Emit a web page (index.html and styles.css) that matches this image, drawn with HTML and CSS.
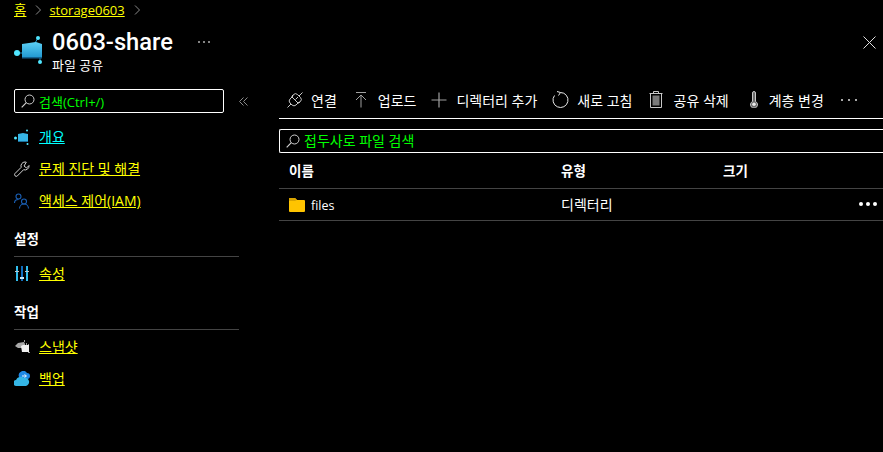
FILE: index.html
```html
<!DOCTYPE html>
<html lang="ko">
<head>
    <meta charset="UTF-8">
    <title>0603-share - 파일 공유</title>
    <link rel="stylesheet" href="styles.css">
</head>
<body>
    <nav class="breadcrumb">
        <a class="home" href="#">홈</a>
        <svg class="crumb-sep" width="6" height="10" viewBox="0 0 6 10"><path d="M1 .5 5.500 5 1 9.500" fill="none" stroke="#8a8a8a"/></svg>
        <a href="#">storage0603</a>
        <svg class="crumb-sep" width="6" height="10" viewBox="0 0 6 10"><path d="M1 .5 5.500 5 1 9.500" fill="none" stroke="#8a8a8a"/></svg>
    </nav>

    <header class="title-bar">
        <svg class="share-icon" width="29" height="30" viewBox="0 0 29 30">
            <defs>
                <linearGradient id="shareFill" x1="0" y1="0" x2="0" y2="1">
                    <stop offset="0" stop-color="#5cd0f5"/>
                    <stop offset="1" stop-color="#1f96cf"/>
                </linearGradient>
            </defs>
            <path d="M21 9 24 4M3 19h5M26 24v4" stroke="#1f8fbf"/>
            <path d="M8 10 22 8l6 2v14H8z" fill="url(#shareFill)"/>
            <path d="M8 23h20v1.500H8z" fill="#13618f"/>
            <circle cx="24" cy="4" r="2" fill="#50e6ff"/>
            <circle cx="3" cy="19" r="3" fill="#50e6ff"/>
            <circle cx="26" cy="28" r="2" fill="#50e6ff"/>
        </svg>
        <div class="title-text">
            <h1>0603-share</h1>
            <p>파일 공유</p>
        </div>
        <div class="dots title-more"><i></i><i></i><i></i></div>
        <svg class="close-icon" width="13" height="13" viewBox="0 0 13 13"><path d="M.5.500l12 12M12.500.500l-12 12" stroke="#e0e0e0" fill="none"/></svg>
    </header>

    <div class="content">
        <aside class="sidebar">
            <div class="side-search-row">
                <div class="search-box side-search">
                    <svg width="14" height="14" viewBox="0 0 14 14"><circle cx="8.500" cy="5.500" r="4.500" fill="none" stroke="#d0d0d0"/><path d="M5.300 8.700.7 13.300" stroke="#d0d0d0" stroke-width="1.200"/></svg>
                    <span>검색(Ctrl+/)</span>
                </div>
                <svg class="collapse" width="9" height="9" viewBox="0 0 9 9"><path d="M4.500.500.500 4.500l4 4M8.500.500l-4 4 4 4" fill="none" stroke="#8a8a8a"/></svg>
            </div>

            <ul class="menu">
                <li>
                    <svg width="16" height="16" viewBox="0 0 16 16">
                        <path d="M4 5 9 4l5 1v8H4z" fill="#35b6e6"/>
                        <path d="M4 12h10v1H4z" fill="#1b6f9c"/>
                        <circle cx="13" cy="1.500" r="1" fill="#50e6ff"/><circle cx="1.500" cy="9" r="1.500" fill="#50e6ff"/><circle cx="13.500" cy="15" r="1" fill="#50e6ff"/>
                    </svg>
                    <a class="current" href="#">개요</a>
                </li>
                <li>
                    <svg width="16" height="16" viewBox="0 0 16 16"><path d="M11 1a4 4 0 0 0-3.800 5.300L1 12.500a1.700 1.700 0 0 0 2.400 2.400l6.200-6.200A4 4 0 0 0 15 4.500L12.500 7 10 5l2.300-3.800A4 4 0 0 0 11 1z" fill="none" stroke="#d4d4d4"/></svg>
                    <a href="#">문제 진단 및 해결</a>
                </li>
                <li>
                    <svg width="16" height="16" viewBox="0 0 16 16" fill="none" stroke="#1a5fb4" stroke-width="1.100"><circle cx="4.500" cy="3.500" r="2.500"/><path d="M.5 10c0-2 1.500-3.500 4-3.500"/><circle cx="10" cy="8.500" r="2.500"/><path d="M5.500 15.500c0-2.500 2-4.500 4.500-4.500s4.500 2 4.500 4.500"/></svg>
                    <a href="#">액세스 제어(IAM)</a>
                </li>
            </ul>

            <h2 class="section-title">설정</h2>
            <ul class="menu">
                <li>
                    <svg width="16" height="16" viewBox="0 0 16 16">
                        <path d="M2 0h2v15H2zM12 0h2v15h-2z" fill="#32bdec"/><path d="M7 0h2v15H7z" fill="#0f6cbd"/>
                        <path d="M1 5h4v1H1zM11 5h4v1h-4z" fill="#b8c8d0"/><path d="M6 11h4v2H6z" fill="#c8e8f8"/>
                    </svg>
                    <a href="#">속성</a>
                </li>
            </ul>

            <h2 class="section-title">작업</h2>
            <ul class="menu">
                <li>
                    <svg width="16" height="16" viewBox="0 0 16 16">
                        <path d="M1 7l3-3 6-1 1 2v4H4z" fill="#a8a8a8"/>
                        <path d="M10 1h1v2h-1zM14 5h1v2h-1zM12 4h1v2h-1zM14 13h2v1h-2z" fill="#9a9a9a"/>
                        <path d="M7 7l2-1h6v7H8z" fill="#f0f0f0"/>
                    </svg>
                    <a href="#">스냅샷</a>
                </li>
                <li>
                    <svg width="16" height="16" viewBox="0 0 16 16">
                        <path d="M5 6a4.500 4.500 0 0 1 8-4 3 3 0 0 1 3 3 3 3 0 0 1-2 3H8z" fill="#1e88e5"/>
                        <path d="M3 15a3 3 0 0 1-1-6 5 5 0 0 1 8-2 3.500 3.500 0 0 1 2 8z" fill="#35b6e6"/>
                        <path d="M8 5h4M10.500 3.500l2 1.500-2 1.500" stroke="#e8f4ff" fill="none"/>
                    </svg>
                    <a href="#">백업</a>
                </li>
            </ul>
        </aside>

        <main class="main">
            <div class="toolbar">
                <button class="tool tool-link">
                    <svg width="16" height="16" viewBox="0 0 16 16" fill="none" stroke="#c8c8c8"><path d="M.5 15.500l3.500-3.500M15.500.500 12 4M5 5l6 6-2 2a3 3 0 0 1-4 0l-2-2a3 3 0 0 1 0-4zM6.500 3.500 3 7M12.500 9.500 9 13M11 5 8.500 7.500"/><path d="M4.500 4.500l2-2a3 3 0 0 1 4 0l3 3a3 3 0 0 1 0 4l-2 2"/></svg>
                    <span>연결</span>
                </button>
                <button class="tool tool-upload">
                    <svg width="12" height="16" viewBox="0 0 12 16" fill="none" stroke="#a0a0a0"><path d="M1 .5h10M6 15.500V3M1 8l5-5 5 5"/></svg>
                    <span>업로드</span>
                </button>
                <button class="tool tool-add">
                    <svg width="16" height="16" viewBox="0 0 16 16" stroke="#a0a0a0" stroke-width="1.200"><path d="M8 .5v15M.5 8h15"/></svg>
                    <span>디렉터리 추가</span>
                </button>
                <button class="tool tool-refresh">
                    <svg width="17" height="17" viewBox="0 0 17 17" fill="none" stroke="#e8e8e8"><path d="M8.500 1.500a7.500 7.500 0 1 1-6 3"/><path d="M5 .5 8.500 1.500 6.500 4.500"/></svg>
                    <span>새로 고침</span>
                </button>
                <button class="tool tool-delete">
                    <svg width="14" height="17" viewBox="0 0 14 17"><path d="M.5 2.500h13M4.500 2.500v-2h5v2" fill="none" stroke="#c8c8c8"/><path d="M1.500 2.500h11v14h-11z" fill="none" stroke="#c8c8c8"/><path d="M3.500 4.500h7v10h-7z" fill="#7a7a7a"/></svg>
                    <span>공유 삭제</span>
                </button>
                <button class="tool tool-tier">
                    <svg width="8" height="17" viewBox="0 0 8 17"><path d="M2.500 2a1.500 1.500 0 0 1 3 0v8.500a3.500 3.500 0 1 1-3 0z" fill="#6a6a6a" stroke="#c8c8c8"/><circle cx="4" cy="13.300" r="1.800" fill="#e8e8e8"/></svg>
                    <span>계층 변경</span>
                </button>
                <div class="dots tool-more"><i></i><i></i><i></i></div>
            </div>

            <div class="search-box file-search">
                <svg width="14" height="14" viewBox="0 0 14 14"><circle cx="8.500" cy="5.500" r="4.500" fill="none" stroke="#d0d0d0"/><path d="M5.300 8.700.7 13.300" stroke="#d0d0d0" stroke-width="1.200"/></svg>
                <span>접두사로 파일 검색</span>
            </div>

            <div class="row head">
                <div class="col-name">이름</div>
                <div class="col-type">유형</div>
                <div class="col-size">크기</div>
            </div>
            <div class="row">
                <div class="col-name">
                    <svg width="16" height="14" viewBox="0 0 16 14"><path d="M0 1a1 1 0 0 1 1-1h5l2 2h7a1 1 0 0 1 1 1v10a1 1 0 0 1-1 1H1a1 1 0 0 1-1-1z" fill="#ffc400"/><path d="M0 1a1 1 0 0 1 1-1h5l2 2-2 1H0z" fill="#d9a400"/></svg>
                    <span class="file-name">files</span>
                </div>
                <div class="col-type">디렉터리</div>
                <div class="col-size"></div>
                <div class="dots row-more"><i></i><i></i><i></i></div>
            </div>
        </main>
    </div>
</body>
</html>
```

FILE: styles.css
```css
* {
    box-sizing: border-box;
}
html, body {
    height: 100%;
}
body {
    margin: 0;
    background: #000;
    color: #fff;
    font-family: "Open Sans", "Noto Sans CJK KR", sans-serif;
    font-size: 14px;
    overflow: hidden;
}
a {
    color: #ff0;
    text-decoration: underline;
    text-underline-offset: 1px;
}
ul {
    list-style: none;
    margin: 0;
    padding: 0;
}
svg {
    flex: none;
    display: block;
}

.dots {
    display: flex;
    align-items: center;
    flex: none;
}
.dots i {
    display: block;
    border-radius: 50%;
    background: #e0e0e0;
}

.breadcrumb {
    display: flex;
    align-items: center;
    height: 18px;
    padding: 2px 0 0 14px;
    font-size: 13px;
    line-height: 16px;
}
.breadcrumb .home {
    font-size: 13.5px;
}
.crumb-sep {
    margin: 0 8px 0 9px;
}

.title-bar {
    display: flex;
    align-items: flex-start;
    height: 62px;
    padding: 10px 14px 0 14px;
}
.share-icon {
    margin-top: 6px;
}
.title-text {
    margin-left: 9px;
}
h1 {
    margin: 0;
    font-family: Roboto, "Open Sans", sans-serif;
    font-size: 23.7px;
    font-weight: 500;
    line-height: 28px;
}
.title-text p {
    margin: 2px 0 0;
    font-size: 13px;
    line-height: 14px;
}
.title-more {
    margin: 13px 0 0 25px;
    gap: 3px;
}
.title-more i {
    width: 2px;
    height: 2px;
    background: #b0b0b0;
}
.close-icon {
    margin: 8px 0 0 auto;
    position: relative;
    left: 7px;
}

.content {
    display: flex;
}
.sidebar {
    width: 279px;
    flex: none;
    padding: 9px 40px 0 14px;
}
.search-box {
    display: flex;
    align-items: center;
    border: 1px solid #fff;
    color: #0f0;
}
.side-search-row {
    display: flex;
    align-items: center;
    width: 240px;
}
.side-search {
    width: 210px;
    height: 24px;
    padding-left: 6px;
    border-radius: 2px;
    font-size: 13px;
}
.side-search span {
    margin-left: 4px;
}
.collapse {
    margin-left: 15px;
}
.menu li {
    display: flex;
    align-items: center;
    height: 32px;
    gap: 9px;
}
.menu li a {
    margin-bottom: 2px;
}
.side-search-row + .menu {
    margin-top: 8px;
}
.menu a.current {
    color: #0ff;
}
.section-title {
    margin: 14px 0 0;
    height: 26px;
    border-bottom: 1px solid #444;
    font-size: 13.5px;
    font-weight: 600;
    line-height: 16px;
}
.section-title + .menu {
    margin-top: 1px;
}

.main {
    flex: 1;
    min-width: 0;
}
.toolbar {
    display: flex;
    align-items: center;
    height: 39px;
    padding: 1px 0 0 8px;
    border-bottom: 1px solid #fff;
}
.tool {
    display: flex;
    align-items: center;
    padding: 0;
    border: 0;
    background: none;
    color: #fff;
    font: inherit;
    gap: 8px;
}
.tool-upload { margin-left: 18px; gap: 11px; }
.tool-add { margin-left: 15px; gap: 9px; }
.tool-refresh { margin-left: 15px; gap: 8px; }
.tool-delete { margin-left: 16px; gap: 11px; }
.tool-tier { margin-left: 21px; gap: 11px; }
.tool-more {
    margin-left: 17px;
    gap: 5px;
}
.tool-more i {
    width: 2px;
    height: 2px;
}
.file-search {
    height: 24px;
    margin: 10px 0 0;
    padding-left: 6px;
    border-right: 0;
    border-radius: 2px 0 0 2px;
}
.file-search span {
    margin: 0 0 2px 4px;
}
.row {
    display: flex;
    align-items: center;
    height: 32px;
    border-bottom: 1px solid #444;
    position: relative;
}
.row.head {
    height: 36px;
    font-size: 13.5px;
    font-weight: 600;
}
.row.head div {
    margin-bottom: 2px;
}
.col-name {
    display: flex;
    align-items: center;
    gap: 6px;
    width: 282px;
    padding-left: 10px;
}
.file-name {
    margin-top: 1px;
    font-size: 12.5px;
}
.col-type {
    width: 162px;
    margin-bottom: 2px;
}
.row-more {
    position: absolute;
    right: 6px;
    top: 13px;
    gap: 3px;
}
.row-more i {
    width: 4px;
    height: 4px;
    background: #fff;
}
```
